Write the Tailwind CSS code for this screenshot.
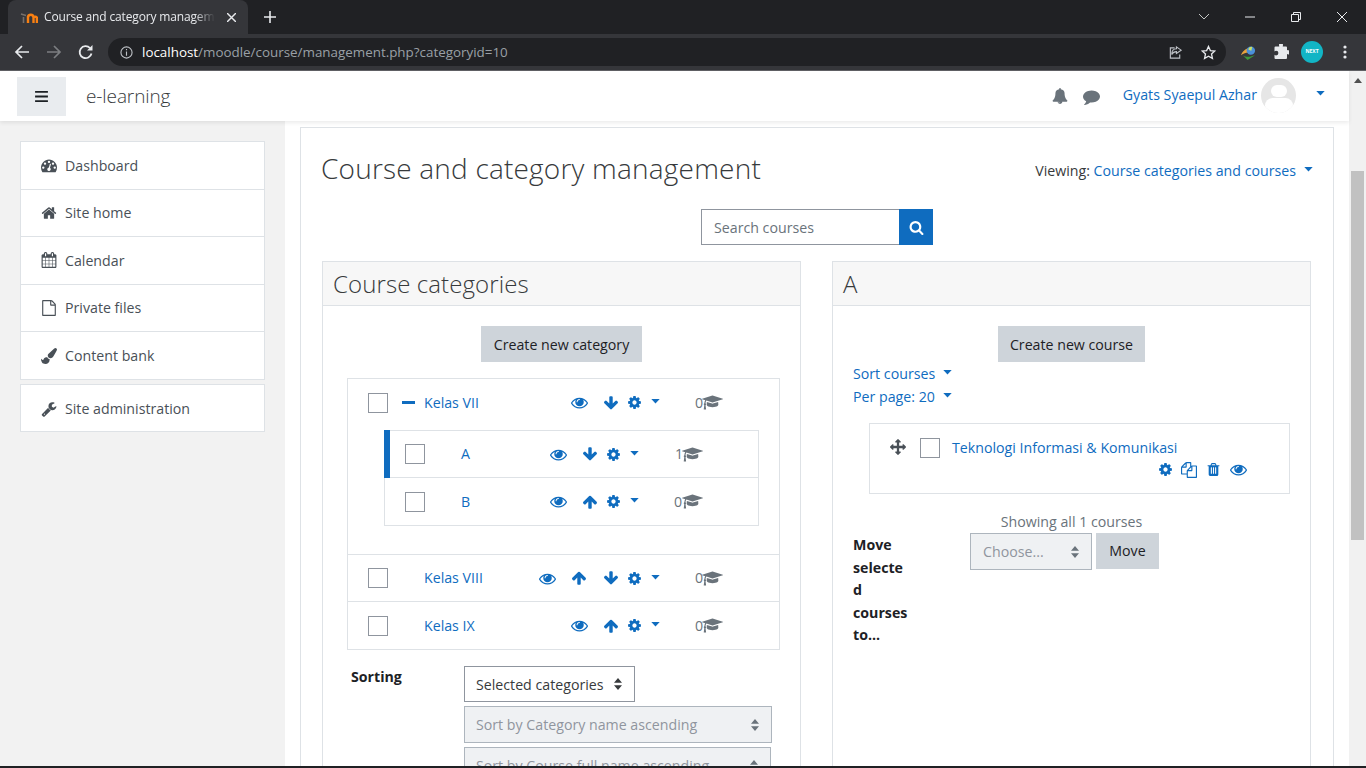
<!DOCTYPE html>
<html lang="en">
<head>
    <meta charset="UTF-8">
    <title>Course and category management</title>
    <script src="https://cdn.jsdelivr.net/npm/@tailwindcss/browser@4"></script>
</head>
<body class="h-screen overflow-hidden flex flex-col bg-white text-[14.2px] text-[#373a3c] font-['Open_Sans',sans-serif]">
    <!-- icon set -->
    <svg class="hidden">
        <symbol id="i-bell" viewBox="0 0 1792 1792"><path d="M912 1696q0-16-16-16-59 0-101.5-42.5t-42.5-101.5q0-16-16-16t-16 16q0 73 51.5 124.5t124.5 51.5q16 0 16-16zm816-288q0 52-38 90t-90 38h-448q0 106-75 181t-181 75-181-75-75-181h-448q-52 0-90-38t-38-90q50-42 91-88t85-119.5 74.5-158.5 50-206 19.5-260q0-152 117-282.5t307-158.5q-8-19-8-39 0-40 28-68t68-28 68 28 28 68q0 20-8 39 190 28 307 158.5t117 282.5q0 139 19.5 260t50 206 74.5 158.5 85 119.5 91 88z"/></symbol>
        <symbol id="i-comment" viewBox="0 0 1792 1792"><path d="M1792 896q0 174-120 321.5t-326 233-450 85.5q-70 0-145-8-198 175-460 242-49 14-114 22-17 2-30.5-9t-17.5-29v-1q-3-4-.5-12t2-10 4.5-9.5l6-9 7-8.5 8-9q7-8 31-34.5t34.5-38 31-39.5 32.5-51 27-59 26-76q-157-89-247.5-220t-90.5-281q0-130 71-248.5t191-204.5 286-136.5 348-50.5q244 0 450 85.5t326 233 120 321.5z"/></symbol>
        <symbol id="i-cog" viewBox="0 0 1792 1792"><path d="M1152 896q0-106-75-181t-181-75-181 75-75 181 75 181 181 75 181-75 75-181zm512-109v222q0 12-8 23t-20 13l-185 28q-19 54-39 91 35 50 107 138 10 12 10 25t-9 23q-27 37-99 108t-94 71q-12 0-26-9l-138-108q-44 23-91 38-16 136-29 186-7 28-36 28h-222q-14 0-24.5-8.5t-11.5-21.5l-28-184q-49-16-90-37l-141 107q-10 9-25 9-14 0-25-11-126-114-165-168-7-10-7-23 0-12 8-23 15-21 51-66.5t54-70.5q-27-50-41-99l-183-27q-13-2-21-12.5t-8-23.5v-222q0-12 8-23t19-13l186-28q14-46 39-92-40-57-107-138-10-12-10-24 0-10 9-23 26-36 98.5-107.5t94.5-71.5q13 0 26 10l138 107q44-23 91-38 16-136 29-186 7-28 36-28h222q14 0 24.5 8.5t11.5 21.5l28 184q49 16 90 37l142-107q9-9 24-9 13 0 25 10 129 119 165 170 7 8 7 22 0 12-8 23-15 21-51 66.5t-54 70.5q26 50 41 98l183 28q13 2 21 12.5t8 23.5z"/></symbol>
        <symbol id="i-eye" viewBox="0 0 1792 1792"><path d="M1664 960q-152-236-381-353 61 104 61 225 0 185-131.5 316.5t-316.5 131.5-316.5-131.5-131.5-316.5q0-121 61-225-229 117-381 353 133 205 333.5 326.5t434.5 121.5 434.5-121.5 333.5-326.5zm-720-384q0-20-14-34t-34-14q-125 0-214.5 89.5t-89.5 214.5q0 20 14 34t34 14 34-14 14-34q0-86 61-147t147-61q20 0 34-14t14-34zm848 384q0 34-20 69-140 230-376.5 368.5t-499.5 138.5-499.5-139-376.5-368q-20-35-20-69t20-69q140-229 376.5-368t499.5-139 499.5 139 376.5 368q20 35 20 69z"/></symbol>
        <symbol id="i-down" viewBox="0 0 1792 1792"><path d="M1675 832q0 53-37 90l-651 652q-39 37-91 37-53 0-90-37l-651-652q-38-36-38-90 0-53 38-91l74-75q39-37 91-37 53 0 90 37l294 294v-704q0-52 38-90t90-38h128q52 0 90 38t38 90v704l294-294q37-37 90-37 52 0 91 37l75 75q37 39 37 91z"/></symbol>
        <symbol id="i-up" viewBox="0 0 1792 1792"><path d="M1675 971q0 51-37 90l-75 75q-38 38-91 38-54 0-90-38l-294-293v704q0 52-37.5 84.5t-90.5 32.5h-128q-53 0-90.5-32.5t-37.5-84.5v-704l-294 293q-36 38-90 38t-90-38l-75-75q-38-38-38-90 0-53 38-91l651-651q35-37 90-37 54 0 91 37l651 651q37 39 37 91z"/></symbol>
        <symbol id="i-cap" viewBox="0 0 2304 1792"><path d="M1774 836l18 316q4 69-82 128t-235 93.5-323 34.5-323-34.5-235-93.5-82-128l18-316 574 181q22 7 48 7t48-7zm530-324q0 23-22 31l-1120 352q-4 1-10 1t-10-1l-652-206q-43 34-71 111.5t-34 178.5q63 36 63 109 0 69-58 107l58 433q2 14-8 25-9 11-24 11h-192q-15 0-24-11-10-11-8-25l58-433q-58-38-58-107 0-73 65-111 11-207 98-330l-333-104q-22-8-22-31t22-31l1120-352q4-1 10-1t10 1l1120 352q22 8 22 31z"/></symbol>
        <symbol id="i-home" viewBox="0 0 1792 1792"><path d="M1472 992v480q0 26-19 45t-45 19h-384v-384h-256v384h-384q-26 0-45-19t-19-45v-480q0-1 .5-3t.5-3l575-474 575 474q1 2 1 6zm223-69l-62 74q-8 9-21 11h-3q-13 0-21-7l-692-577-692 577q-12 8-24 7-13-2-21-11l-62-74q-8-10-7-23.5t11-21.5l719-599q32-26 76-26t76 26l244 204v-195q0-14 9-23t23-9h192q14 0 23 9t9 23v408l219 182q10 8 11 21.5t-7 23.5z"/></symbol>
        <symbol id="i-dash" viewBox="0 0 1792 1792"><path d="M384 1184q0-53-37.5-90.5t-90.5-37.5-90.5 37.5-37.5 90.5 37.5 90.5 90.5 37.5 90.5-37.5 37.5-90.5zm192-448q0-53-37.5-90.5t-90.5-37.5-90.5 37.5-37.5 90.5 37.5 90.5 90.5 37.5 90.5-37.5 37.5-90.5zm428 481l101-382q6-26-7.5-48.5t-38.5-29.5-48 6.5-30 39.5l-101 382q-60 5-107 43.5t-63 98.5q-20 77 20 146t117 89 146-20 89-117q16-60-6-117t-72-91zm660-33q0-53-37.5-90.5t-90.5-37.5-90.5 37.5-37.5 90.5 37.5 90.5 90.5 37.5 90.5-37.5 37.5-90.5zm-640-640q0-53-37.5-90.5t-90.5-37.5-90.5 37.5-37.5 90.5 37.5 90.5 90.5 37.5 90.5-37.5 37.5-90.5zm448 192q0-53-37.5-90.5t-90.5-37.5-90.5 37.5-37.5 90.5 37.5 90.5 90.5 37.5 90.5-37.5 37.5-90.5zm320 448q0 261-141 483-19 29-54 29h-1402q-35 0-54-29-141-221-141-483 0-182 71-348t191-286 286-191 348-71 348 71 286 191 191 286 71 348z"/></symbol>
        <symbol id="i-cal" viewBox="0 0 1792 1792"><path d="M192 1664h288v-288h-288v288zm352 0h320v-288h-320v288zm-352-352h288v-320h-288v320zm352 0h320v-320h-320v320zm-352-384h288v-288h-288v288zm736 736h320v-288h-320v288zm-384-736h320v-288h-320v288zm768 736h288v-288h-288v288zm-384-352h320v-320h-320v320zm-352-864v-288q0-13-9.5-22.5t-22.5-9.5h-64q-13 0-22.5 9.5t-9.5 22.5v288q0 13 9.5 22.5t22.5 9.5h64q13 0 22.5-9.5t9.5-22.5zm736 864h288v-320h-288v320zm-384-384h320v-288h-320v288zm384 0h288v-288h-288v288zm32-480v-288q0-13-9.5-22.5t-22.5-9.5h-64q-13 0-22.5 9.5t-9.5 22.5v288q0 13 9.5 22.5t22.5 9.5h64q13 0 22.5-9.5t9.5-22.5zm384-64v1280q0 52-38 90t-90 38h-1408q-52 0-90-38t-38-90v-1280q0-52 38-90t90-38h128v-96q0-66 47-113t113-47h64q66 0 113 47t47 113v96h384v-96q0-66 47-113t113-47h64q66 0 113 47t47 113v96h128q52 0 90 38t38 90z"/></symbol>
        <symbol id="i-file" viewBox="0 0 1792 1792"><path d="M1596 380q28 28 48 76t20 88v1152q0 40-28 68t-68 28h-1344q-40 0-68-28t-28-68v-1600q0-40 28-68t68-28h896q40 0 88 20t76 48zm-444-244v376h376q-10-29-22-41l-313-313q-12-12-41-22zm384 1528v-1024h-416q-40 0-68-28t-28-68v-416h-768v1536h1280z"/></symbol>
        <symbol id="i-brush" viewBox="0 0 1792 1792"><path d="M1615 0q70 0 122.5 46.5t52.5 116.5q0 63-45 151-332 629-465 752-97 91-218 91-126 0-216.5-92.5t-90.5-219.5q0-128 92-212l638-579q59-54 130-54zm-909 1034q39 76 106.5 130t150.5 76l1 71q4 213-129.5 347t-348.5 134q-123 0-218-46.5t-152.5-127.5-86.5-183-29-220q7 5 41 30t62 44.5 59 36.5 46 17q41 0 55-37 25-66 57.5-112.5t69.5-76 88-47.5 103-25.5 125-10.5z"/></symbol>
        <symbol id="i-wrench" viewBox="0 0 1792 1792"><path d="M448 1472q0-26-19-45t-45-19-45 19-19 45 19 45 45 19 45-19 19-45zm644-420l-682 682q-37 37-90 37-52 0-91-37l-106-108q-38-36-38-90 0-53 38-91l681-681q39 98 114.5 173.5t173.5 114.5zm634-435q0 39-23 106-47 134-164.5 217.5t-258.5 83.5q-185 0-316.5-131.5t-131.5-316.5 131.5-316.5 316.5-131.5q58 0 121.5 16.5t107.5 46.5q16 11 16 28t-16 28l-293 169v224l193 107q5-3 79-48.5t135.5-81 70.5-35.5q15 0 23.5 10t8.5 25z"/></symbol>
        <symbol id="i-move" viewBox="0 0 1792 1792"><path d="M1792 896q0 26-19 45l-256 256q-19 19-45 19t-45-19-19-45v-128h-384v384h128q26 0 45 19t19 45-19 45l-256 256q-19 19-45 19t-45-19l-256-256q-19-19-19-45t19-45 45-19h128v-384h-384v128q0 26-19 45t-45 19-45-19l-256-256q-19-19-19-45t19-45l256-256q19-19 45-19t45 19 19 45v128h384v-384h-128q-26 0-45-19t-19-45 19-45l256-256q19-19 45-19t45 19l256 256q19 19 19 45t-19 45-45 19h-128v384h384v-128q0-26 19-45t45-19 45 19l256 256q19 19 19 45z"/></symbol>
        <symbol id="i-copy" viewBox="0 0 1792 1792"><path d="M1696 384q40 0 68 28t28 68v1216q0 40-28 68t-68 28h-960q-40 0-68-28t-28-68v-288h-544q-40 0-68-28t-28-68v-672q0-40 20-88t48-76l408-408q28-28 76-48t88-20h416q40 0 68 28t28 68v328q68-40 128-40h416zm-544 213l-299 299h299v-299zm-640-384l-299 299h299v-299zm196 647l316-316v-416h-384v416q0 40-28 68t-68 28h-416v640h512v-256q0-40 20-88t48-76zm956 804v-1152h-384v416q0 40-28 68t-68 28h-416v640h896z"/></symbol>
        <symbol id="i-trash" viewBox="0 0 1792 1792"><path d="M704 1376v-704q0-14-9-23t-23-9h-64q-14 0-23 9t-9 23v704q0 14 9 23t23 9h64q14 0 23-9t9-23zm256 0v-704q0-14-9-23t-23-9h-64q-14 0-23 9t-9 23v704q0 14 9 23t23 9h64q14 0 23-9t9-23zm256 0v-704q0-14-9-23t-23-9h-64q-14 0-23 9t-9 23v704q0 14 9 23t23 9h64q14 0 23-9t9-23zm-544-992h448l-48-117q-7-9-17-11h-317q-10 2-17 11zm928 32v64q0 14-9 23t-23 9h-96v948q0 83-47 143.5t-113 60.5h-832q-66 0-113-58.5t-47-141.5v-952h-96q-14 0-23-9t-9-23v-64q0-14 9-23t23-9h309l70-167q15-37 54-63t79-26h320q40 0 79 26t54 63l70 167h309q14 0 23 9t9 23z"/></symbol>
        <symbol id="i-search" viewBox="0 0 1792 1792"><path d="M1216 832q0-185-131.5-316.5t-316.5-131.5-316.5 131.5-131.5 316.5 131.5 316.5 316.5 131.5 316.5-131.5 131.5-316.5zm512 832q0 52-38 90t-90 38q-54 0-90-38l-343-342q-179 124-399 124-143 0-273.5-55.5t-225-150-150-225-55.5-273.5 55.5-273.5 150-225 225-150 273.5-55.5 273.5 55.5 225 150 150 225 55.5 273.5q0 220-124 399l343 343q37 37 37 90z"/></symbol>
        <symbol id="i-caret" viewBox="0 0 10 6"><path d="M0 0h10L5 5.5z"/></symbol>
        <symbol id="i-updown" viewBox="0 0 8 12"><path d="M4 0l4 4.8H0zM4 12L0 7.2h8z"/></symbol>
    </svg>

    <!-- browser tab strip -->
    <div class="h-[34px] shrink-0 bg-[#202124] flex items-end pl-[8px] text-white">
        <div class="w-[240px] h-[34px] bg-[#35363a] rounded-t-lg flex items-center pl-[12px] pr-[12px] gap-[6px]">
            <svg viewBox="0 0 18 12" class="w-[18px] h-[12px] shrink-0" fill="none" stroke="#f98012" stroke-width="2.4"><path d="M8 12V5M8 6.5a2.6 2.6 0 0 1 5.5 0V12M13.5 6.5a2.4 2.4 0 0 1 3.4 0V12" /><path d="M3.5 12V6M1 3l5 1.5" stroke="#77706a" stroke-width="1.6"/></svg>
            <span class="flex-1 overflow-hidden whitespace-nowrap text-[12px] text-[#e8eaed] tracking-[-0.15px] [mask-image:linear-gradient(to_right,black_88%,transparent)]">Course and category management</span>
            <svg viewBox="0 0 10 10" class="w-[9px] h-[9px] ml-[6px] shrink-0" stroke="#e8eaed" stroke-width="1.6"><path d="M0 0l10 10M10 0L0 10"/></svg>
        </div>
        <svg viewBox="0 0 12 12" class="w-[12px] h-[12px] ml-[16px] mb-[11px]" stroke="#e8eaed" stroke-width="1.6"><path d="M6 0v12M0 6h12"/></svg>
        <div class="flex-1"></div>
        <div class="h-[34px] flex items-center">
            <svg viewBox="0 0 10 6" class="w-[10px] h-[6px] mr-[36px]" fill="none" stroke="#c4c7c5"><path d="M0 0l5 5 5-5"/></svg>
            <svg viewBox="0 0 10 10" class="w-[10px] h-[10px] mr-[36px]" stroke="#e8eaed"><path d="M0 5h10"/></svg>
            <svg viewBox="0 0 10 10" class="w-[10px] h-[10px] mr-[36px]" fill="none" stroke="#e8eaed"><path d="M.5 2.5h7v7h-7zM2.5 2.5v-2h7v7h-2"/></svg>
            <svg viewBox="0 0 10 10" class="w-[10px] h-[10px] mr-[19px]" stroke="#e8eaed"><path d="M0 0l10 10M10 0L0 10"/></svg>
        </div>
    </div>

    <!-- browser toolbar -->
    <div class="h-[37px] shrink-0 bg-[#35363a] border-b border-[#5f6064] flex items-center pl-[14px] pr-[14px]">
        <svg viewBox="0 0 16 16" class="w-[16px] h-[16px]" fill="none" stroke="#e8eaed" stroke-width="1.7"><path d="M15 8H2M8 2L2 8l6 6"/></svg>
        <svg viewBox="0 0 16 16" class="w-[16px] h-[16px] ml-[16px]" fill="none" stroke="#7c7e81" stroke-width="1.7"><path d="M1 8h13M8 2l6 6-6 6"/></svg>
        <svg viewBox="0 0 16 16" class="w-[16px] h-[16px] ml-[16px]" fill="none" stroke="#e8eaed" stroke-width="1.8"><path d="M13.5 9.5A6 6 0 1 1 12 4"/><path d="M14.5 1v5.5H9z" fill="#e8eaed" stroke="none"/></svg>
        <div class="ml-[14px] w-[1118px] h-[28px] rounded-full bg-[#202124] flex items-center pl-[12px] pr-[10px] text-[13.4px]">
            <svg viewBox="0 0 14 14" class="w-[13px] h-[13px] mr-[9px]" fill="none" stroke="#bdc1c6" stroke-width="1.2"><circle cx="7" cy="7" r="6"/><path d="M7 6v4.5M7 3.2v1.5"/></svg>
            <span class="text-white">localhost</span><span class="text-[#9aa0a6]">/moodle/course/management.php?categoryid=10</span>
            <div class="flex-1"></div>
            <svg viewBox="0 0 16 16" class="w-[15px] h-[15px] mr-[18px]" fill="none" stroke="#bdc1c6" stroke-width="1.2"><path d="M7 3H2.5v11h10V10M9 2l5 3.5L9 9V7c-3 0-4 1-5 3 0-4 2-6 5-6z"/></svg>
            <svg viewBox="0 0 16 16" class="w-[15px] h-[15px]" fill="none" stroke="#e8eaed" stroke-width="1.4"><path d="M8 1.5l2 4.4 4.7.5-3.5 3.2 1 4.7L8 11.9l-4.2 2.4 1-4.7L1.3 6.4 6 5.9z"/></svg>
        </div>
        <svg viewBox="0 0 18 16" class="w-[17px] h-[15px] ml-[14px]"><path d="M1 11C2 7 6 4 10 3l-1 5c-3 0-5 1-8 3z" fill="#e8a33d"/><circle cx="11.5" cy="6" r="4.5" fill="#4a90d9"/><path d="M2 10c3 3 8 3 10 2l4-1-8 5z" fill="#3c9a3c"/><path d="M9 5a3 3 0 0 1 4-3l-1 4z" fill="#c5e06a"/></svg>
        <svg viewBox="0 0 16 16" class="w-[16px] h-[16px] ml-[16px]" fill="#e8eaed"><path d="M6 1a2 2 0 0 1 4 0c0 .6-.2 1-.3 1.5H13a1 1 0 0 1 1 1v3c.5-.3 1-.5 1.300-.3a2.200 2.200 0 0 1 0 4.300c-.4 0-.8-.2-1.300-.4V14a1 1 0 0 1-1 1H2.500a1 1 0 0 1-1-1v-3.200c.5.3 1 .6 1.600.6a2.300 2.300 0 0 0 0-4.600c-.6 0-1.100.3-1.600.6V3.500a1 1 0 0 1 1-1h3.800C6.200 2 6 1.600 6 1z"/></svg>
        <div class="w-[22px] h-[22px] rounded-full bg-[#12b5c5] ml-[12px] flex items-center justify-center text-[5px] font-bold text-white shrink-0">NEXT</div>
        <svg viewBox="0 0 4 14" class="w-[4px] h-[14px] ml-[20px]" fill="#e8eaed"><circle cx="2" cy="2" r="1.600"/><circle cx="2" cy="7" r="1.600"/><circle cx="2" cy="12" r="1.600"/></svg>
    </div>

    <!-- page + scrollbar -->
    <div class="flex-1 min-h-0 flex">
        <div class="flex-1 min-w-0 flex flex-col">
            <header class="h-[50px] shrink-0 bg-white flex items-center pl-[17px] pr-[24px] shadow-[0_2px_4px_rgba(0,0,0,0.08)] relative z-10">
                <div class="w-[49px] h-[39px] bg-[#e9ecef] flex items-center justify-center">
                    <svg viewBox="0 0 14 12" class="w-[13px] h-[11px]" fill="#1d2125"><path d="M0 0h14v2H0zM0 5h14v2H0zM0 10h14v2H0z"/></svg>
                </div>
                <span class="ml-[20px] text-[19px] font-light text-[#373a3c] tracking-[-0.1px]">e-learning</span>
                <div class="flex-1"></div>
                <svg class="w-[16px] h-[16px] text-[#6a737b] fill-current"><use href="#i-bell"/></svg>
                <svg class="w-[17px] h-[17px] ml-[15px] text-[#6a737b] fill-current"><use href="#i-comment"/></svg>
                <span class="ml-[23px] text-[#0f6cbf] -mt-[2px]">Gyats Syaepul Azhar</span>
                <div class="ml-[4px] w-[35px] h-[35px] rounded-full bg-[#e6e6e6] overflow-hidden flex flex-col items-center -mt-[2px]">
                    <div class="w-[16px] h-[16px] rounded-full bg-white mt-[7px]"></div>
                    <div class="w-[28px] h-[20px] rounded-full bg-white mt-[1px]"></div>
                </div>
                <svg class="w-[9px] h-[5px] ml-[20px] text-[#0f6cbf] fill-current -mt-[6px]"><use href="#i-caret"/></svg>
            </header>

            <div class="flex-1 min-h-0 flex overflow-hidden">
                <!-- side nav -->
                <aside class="w-[285px] shrink-0 bg-[#f2f2f2] pl-[20px] pr-[20px] pt-[20px] text-[#495057]">
                    <div class="bg-white border border-[#dee2e6]">
                        <div class="h-[47.5px] border-b border-[#dee2e6] flex items-center pl-[20px] gap-[8px]"><svg class="w-[16px] h-[16px] text-[#495057] fill-current"><use href="#i-dash"/></svg>Dashboard</div>
                        <div class="h-[47.5px] border-b border-[#dee2e6] flex items-center pl-[20px] gap-[8px]"><svg class="w-[16px] h-[16px] text-[#495057] fill-current"><use href="#i-home"/></svg>Site home</div>
                        <div class="h-[47.5px] border-b border-[#dee2e6] flex items-center pl-[20px] gap-[8px]"><svg class="w-[16px] h-[16px] text-[#495057] fill-current"><use href="#i-cal"/></svg>Calendar</div>
                        <div class="h-[47.5px] border-b border-[#dee2e6] flex items-center pl-[20px] gap-[8px]"><svg class="w-[16px] h-[16px] text-[#495057] fill-current"><use href="#i-file"/></svg>Private files</div>
                        <div class="h-[47px] flex items-center pl-[20px] gap-[8px]"><svg class="w-[16px] h-[16px] text-[#495057] fill-current"><use href="#i-brush"/></svg>Content bank</div>
                    </div>
                    <div class="bg-white border border-[#dee2e6] mt-[4px]">
                        <div class="h-[46px] flex items-center pl-[20px] pt-[2px] gap-[8px]"><svg class="w-[16px] h-[16px] text-[#495057] fill-current"><use href="#i-wrench"/></svg>Site administration</div>
                    </div>
                </aside>

                <!-- main card -->
                <main class="flex-1 min-w-0 pl-[15px] pr-[15px] pt-[6px]">
                    <div class="border border-[#dee2e6] h-[700px] pl-[20px] pr-[20px]">
                        <div class="flex items-center justify-between pt-[18px] h-[61px]">
                            <h1 class="text-[28px] font-light text-[#373a3c] tracking-[0.2px]">Course and category management</h1>
                            <div class="flex items-center mt-[7px]">Viewing:&nbsp;<span class="text-[#0f6cbf]">Course categories and courses</span><svg class="w-[9px] h-[5px] ml-[8px] text-[#0f6cbf] fill-current -mt-[2px]"><use href="#i-caret"/></svg></div>
                        </div>
                        <div class="flex justify-center mt-[20px]">
                            <div class="w-[198px] h-[36px] border border-[#8f959e] border-r-0 pl-[12px] pt-[2px] flex items-center text-[#6a737b]">Search courses</div>
                            <div class="w-[34px] h-[36px] bg-[#0f6cbf] flex items-center justify-center"><svg class="w-[15px] h-[15px] text-white fill-current"><use href="#i-search"/></svg></div>
                        </div>

                        <div class="flex mt-[16px] ml-[1px] gap-[31px]">
                            <!-- categories -->
                            <section class="w-[479px] h-[520px] border border-[#dee2e6]">
                                <div class="h-[44px] bg-[#f7f7f7] border-b border-[#dee2e6] pl-[10px] flex items-center text-[24px] font-light tracking-[0.1px]">Course categories</div>
                                <div class="flex justify-center mt-[20px]"><div class="h-[36px] w-[161px] bg-[#ced4da] pt-[2px] flex items-center justify-center text-[#1d2125]">Create new category</div></div>
                                <div class="mt-[16px] ml-[24px] w-[433px] border border-[#dee2e6]">
                                    <div class="h-[176px] border-b border-[#dee2e6]">
                                        <div class="h-[47px] flex items-center pl-[20px] relative">
                                            <div class="w-[20px] h-[20px] border border-[#8f959e] shrink-0"></div>
                                            <div class="w-[13px] h-[3px] bg-[#0f6cbf] ml-[14px] mr-[9px] shrink-0"></div>
                                            <span class="text-[#0f6cbf]">Kelas VII</span>
                                            <div class="ml-auto flex items-center text-[#0f6cbf] pr-[119px]">
                                                <svg class="w-[17px] h-[17px] fill-current mr-[15px]"><use href="#i-eye"/></svg>
                                                <svg class="w-[16px] h-[16px] fill-current mr-[8px]"><use href="#i-down"/></svg>
                                                <svg class="w-[15px] h-[15px] fill-current mr-[9px]"><use href="#i-cog"/></svg>
                                                <svg class="w-[9px] h-[5px] fill-current -mt-[2px]"><use href="#i-caret"/></svg>
                                            </div>
                                            <span class="absolute left-[347px] text-[#6a737b]">0</span>
                                            <svg class="absolute left-[354px] w-[21px] h-[17px] text-[#6a737b] fill-current"><use href="#i-cap"/></svg>
                                        </div>
                                        <div class="mt-[4px] ml-[36px] w-[375px] border border-[#dee2e6]">
                                            <div class="h-[47px] border-b border-[#dee2e6] flex items-center pl-[20px] relative">
                                                <div class="absolute -left-[1px] -top-[1px] w-[6px] h-[48px] bg-[#0f6cbf]"></div>
                                                <div class="w-[20px] h-[20px] border border-[#8f959e] shrink-0"></div>
                                                <span class="text-[#0f6cbf] ml-[36px]">A</span>
                                                <div class="ml-auto flex items-center text-[#0f6cbf] pr-[119px]">
                                                    <svg class="w-[17px] h-[17px] fill-current mr-[15px]"><use href="#i-eye"/></svg>
                                                    <svg class="w-[16px] h-[16px] fill-current mr-[8px]"><use href="#i-down"/></svg>
                                                    <svg class="w-[15px] h-[15px] fill-current mr-[9px]"><use href="#i-cog"/></svg>
                                                    <svg class="w-[9px] h-[5px] fill-current -mt-[2px]"><use href="#i-caret"/></svg>
                                                </div>
                                                <span class="absolute left-[290px] text-[#6a737b]">1</span>
                                                <svg class="absolute left-[297px] w-[21px] h-[17px] text-[#6a737b] fill-current"><use href="#i-cap"/></svg>
                                            </div>
                                            <div class="h-[47px] flex items-center pl-[20px] relative">
                                                <div class="w-[20px] h-[20px] border border-[#8f959e] shrink-0"></div>
                                                <span class="text-[#0f6cbf] ml-[36px]">B</span>
                                                <div class="ml-auto flex items-center text-[#0f6cbf] pr-[119px]">
                                                    <svg class="w-[17px] h-[17px] fill-current mr-[15px]"><use href="#i-eye"/></svg>
                                                    <svg class="w-[16px] h-[16px] fill-current mr-[8px]"><use href="#i-up"/></svg>
                                                    <svg class="w-[15px] h-[15px] fill-current mr-[9px]"><use href="#i-cog"/></svg>
                                                    <svg class="w-[9px] h-[5px] fill-current -mt-[2px]"><use href="#i-caret"/></svg>
                                                </div>
                                                <span class="absolute left-[289px] text-[#6a737b]">0</span>
                                                <svg class="absolute left-[297px] w-[21px] h-[17px] text-[#6a737b] fill-current"><use href="#i-cap"/></svg>
                                            </div>
                                        </div>
                                    </div>
                                    <div class="h-[47px] border-b border-[#dee2e6] flex items-center pl-[20px] relative">
                                        <div class="w-[20px] h-[20px] border border-[#8f959e] shrink-0"></div>
                                        <span class="text-[#0f6cbf] ml-[36px]">Kelas VIII</span>
                                        <div class="ml-auto flex items-center text-[#0f6cbf] pr-[119px]">
                                            <svg class="w-[17px] h-[17px] fill-current mr-[15px]"><use href="#i-eye"/></svg>
                                            <svg class="w-[16px] h-[16px] fill-current mr-[16px]"><use href="#i-up"/></svg>
                                            <svg class="w-[16px] h-[16px] fill-current mr-[8px]"><use href="#i-down"/></svg>
                                            <svg class="w-[15px] h-[15px] fill-current mr-[9px]"><use href="#i-cog"/></svg>
                                            <svg class="w-[9px] h-[5px] fill-current -mt-[2px]"><use href="#i-caret"/></svg>
                                        </div>
                                        <span class="absolute left-[347px] text-[#6a737b]">0</span>
                                        <svg class="absolute left-[354px] w-[21px] h-[17px] text-[#6a737b] fill-current"><use href="#i-cap"/></svg>
                                    </div>
                                    <div class="h-[47px] flex items-center pl-[20px] relative">
                                        <div class="w-[20px] h-[20px] border border-[#8f959e] shrink-0"></div>
                                        <span class="text-[#0f6cbf] ml-[36px]">Kelas IX</span>
                                        <div class="ml-auto flex items-center text-[#0f6cbf] pr-[119px]">
                                            <svg class="w-[17px] h-[17px] fill-current mr-[15px]"><use href="#i-eye"/></svg>
                                            <svg class="w-[16px] h-[16px] fill-current mr-[8px]"><use href="#i-up"/></svg>
                                            <svg class="w-[15px] h-[15px] fill-current mr-[9px]"><use href="#i-cog"/></svg>
                                            <svg class="w-[9px] h-[5px] fill-current -mt-[2px]"><use href="#i-caret"/></svg>
                                        </div>
                                        <span class="absolute left-[347px] text-[#6a737b]">0</span>
                                        <svg class="absolute left-[354px] w-[21px] h-[17px] text-[#6a737b] fill-current"><use href="#i-cap"/></svg>
                                    </div>
                                </div>
                                <div class="flex mt-[16px] pl-[28px]">
                                    <div class="w-[113px] font-bold text-[#1d2125]">Sorting</div>
                                    <div class="flex flex-col items-start gap-[4px]">
                                        <div class="w-[171px] h-[36px] border border-[#8f959e] pl-[11px] pr-[12px] pt-[2px] flex items-center justify-between">Selected categories<svg class="w-[8px] h-[12px] text-[#373a3c] fill-current -mt-[2px]"><use href="#i-updown"/></svg></div>
                                        <div class="w-[308px] h-[37px] border border-[#adb5bd] bg-[#eff1f3] pl-[11px] pr-[12px] flex items-center justify-between text-[#8f959e]">Sort by Category name ascending<svg class="w-[8px] h-[12px] text-[#6a737b] fill-current"><use href="#i-updown"/></svg></div>
                                        <div class="w-[307px] h-[37px] border border-[#adb5bd] bg-[#eff1f3] pl-[11px] pr-[12px] flex items-center justify-between text-[#8f959e]">Sort by Course full name ascending<svg class="w-[8px] h-[12px] text-[#6a737b] fill-current"><use href="#i-updown"/></svg></div>
                                    </div>
                                </div>
                            </section>

                            <!-- courses -->
                            <section class="w-[479px] h-[520px] border border-[#dee2e6]">
                                <div class="h-[44px] bg-[#f7f7f7] border-b border-[#dee2e6] pl-[10px] flex items-center text-[24px] font-light">A</div>
                                <div class="flex justify-center mt-[20px]"><div class="h-[36px] w-[147px] bg-[#ced4da] pt-[2px] flex items-center justify-center text-[#1d2125]">Create new course</div></div>
                                <div class="pl-[20px] text-[#0f6cbf] leading-[23px]">
                                    <div class="flex items-center">Sort courses<svg class="w-[9px] h-[5px] ml-[8px] fill-current -mt-[2px]"><use href="#i-caret"/></svg></div>
                                    <div class="flex items-center">Per page: 20<svg class="w-[9px] h-[5px] ml-[8px] fill-current -mt-[2px]"><use href="#i-caret"/></svg></div>
                                </div>
                                <div class="ml-[36px] mt-[15px] w-[421px] h-[71px] border border-[#dee2e6] pl-[20px] pt-[13px]">
                                    <div class="flex items-center">
                                        <svg class="w-[16px] h-[16px] text-[#495057] fill-current mr-[14px] -mt-[2px]"><use href="#i-move"/></svg>
                                        <div class="w-[20px] h-[20px] border border-[#8f959e]"></div>
                                        <span class="ml-[12px] text-[#0f6cbf]">Teknologi Informasi &amp; Komunikasi</span>
                                    </div>
                                    <div class="flex justify-end items-center text-[#0f6cbf] pr-[42px] mt-[3px]">
                                        <svg class="w-[15px] h-[15px] fill-current"><use href="#i-cog"/></svg>
                                        <svg class="w-[16px] h-[16px] fill-current ml-[8px]"><use href="#i-copy"/></svg>
                                        <svg class="w-[15px] h-[15px] fill-current ml-[9px]"><use href="#i-trash"/></svg>
                                        <svg class="w-[17px] h-[17px] fill-current ml-[9px]"><use href="#i-eye"/></svg>
                                    </div>
                                </div>
                                <div class="text-center text-[#6a737b] mt-[18px] leading-[20px]">Showing all 1 courses</div>
                                <div class="flex pl-[20px] mt-[1px]">
                                    <div class="w-[54px] font-bold text-[#1d2125] leading-[22.5px] pt-[1px]">Move selecte<br>d<br>courses to...</div>
                                    <div class="ml-[63px] w-[122px] h-[37px] border border-[#adb5bd] bg-[#eff1f3] pl-[12px] pr-[12px] flex items-center justify-between text-[#8f959e]">Choose...<svg class="w-[8px] h-[12px] text-[#6a737b] fill-current"><use href="#i-updown"/></svg></div>
                                    <div class="ml-[4px] w-[63px] h-[36px] bg-[#ced4da] flex items-center justify-center text-[#1d2125]">Move</div>
                                </div>
                            </section>
                        </div>
                    </div>
                </main>
            </div>
        </div>

        <!-- window scrollbar -->
        <div class="w-[17px] shrink-0 bg-[#f1f1f1] flex flex-col items-center pt-[7px]">
            <svg viewBox="0 0 8 5" class="w-[8px] h-[5px]" fill="#505050"><path d="M4 0l4 5H0z"/></svg>
            <div class="w-[13px] h-[369px] bg-[#c1c1c1] mt-[88px]"></div>
        </div>
    </div>
    <div class="h-[2px] shrink-0 bg-[#202124]"></div>
</body>
</html>
